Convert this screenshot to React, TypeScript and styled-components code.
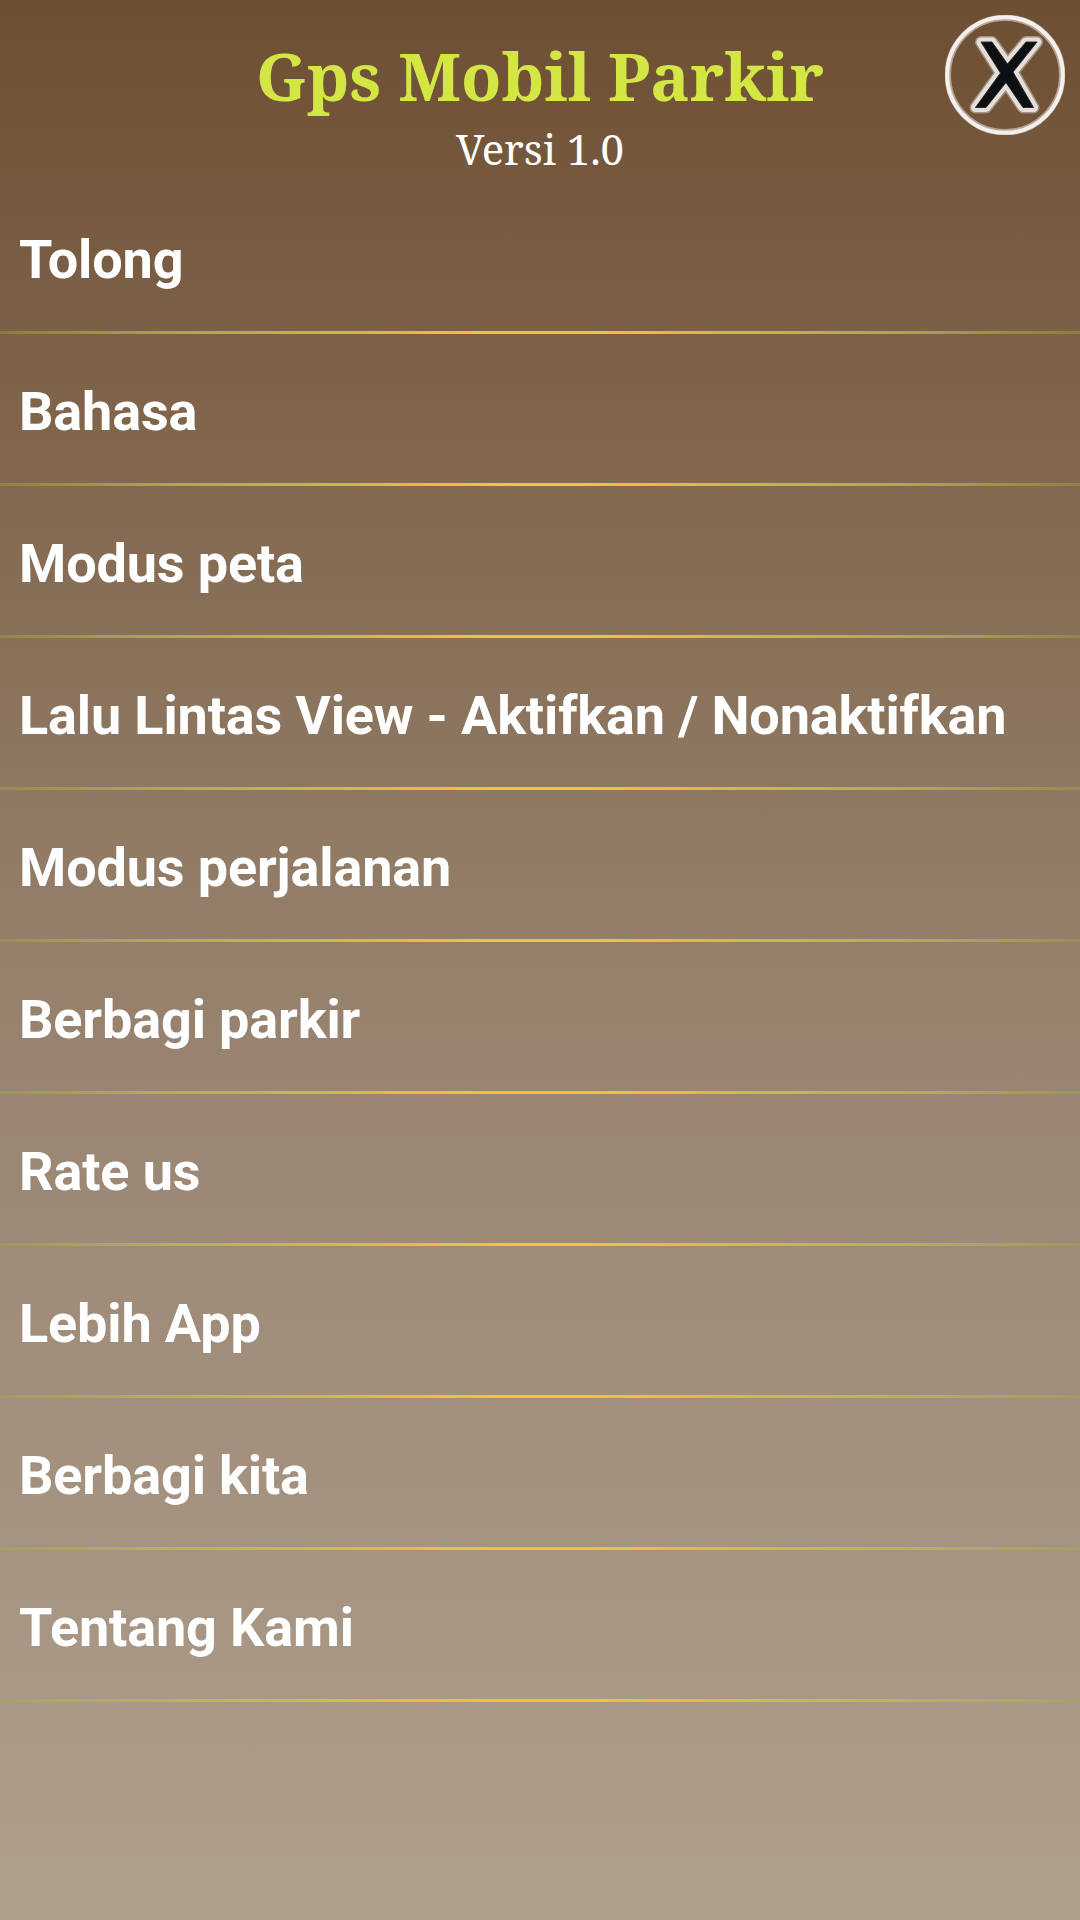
import React from "react";
import styled, { createGlobalStyle } from "styled-components";

const GlobalStyle = createGlobalStyle`
  body { margin: 0; }
`;
const Screen = styled.main`
  position: relative;
  width: 1080px;
  height: 1920px;
  overflow: hidden;
  background: linear-gradient(180deg, #6d4f33 0%, #7f6349 20%, #8f7963 42%, #9a8673 58%, #af9f8d 100%);
  color: #fff;
`;
const Header = styled.header`
  height: 182px;
  display: flex;
  flex-direction: column;
  align-items: center;
  box-sizing: border-box;
  padding-top: 35px;
  font-family: "Droid Serif", "Noto Serif", "DejaVu Serif", serif;
`;
const Title = styled.h1`
  margin: 0;
  font-size: 66px;
  line-height: 80px;
  font-weight: 700;
  color: #d4e644;
  white-space: nowrap;
`;
const Version = styled.div`
  padding-top: 2px;
  font-size: 42px;
  line-height: 64px;
  letter-spacing: -0.1px;
`;
const Close = styled.button`
  position: absolute;
  top: 15px;
  right: 15px;
  width: 120px;
  height: 120px;
  padding: 0;
  border: 0;
  background: none;
`;
const List = styled.ul`
  margin: 0;
  padding: 0;
  list-style: none;
`;
const Row = styled.li`
  height: 152px;
  box-sizing: border-box;
  display: flex;
  flex-direction: column;
`;
const Label = styled.span`
  height: 149px;
  box-sizing: border-box;
  padding: 46px 19px 0;
  font: 700 54px/64px Roboto, sans-serif;
  letter-spacing: -0.14px;
  white-space: nowrap;
`;
const Divider = styled.div`
  height: 3px;
  background: linear-gradient(
    90deg,
    rgba(160, 175, 70, 0.35),
    rgba(190, 192, 68, 0.7) 15%,
    rgba(212, 194, 66, 0.9) 32%,
    #ffbb48 46%,
    #ffbb48 54%,
    rgba(212, 194, 66, 0.9) 68%,
    rgba(190, 192, 68, 0.7) 85%,
    rgba(160, 175, 70, 0.35)
  );
`;

const items = ["Tolong", "Bahasa", "Modus peta", "Lalu Lintas View - Aktifkan / Nonaktifkan", "Modus perjalanan", "Berbagi parkir", "Rate us", "Lebih App", "Berbagi kita", "Tentang Kami"];

const crossPath = "M36 27 L47 27 L62.5 49 L81 27 L92 27 L68 57 L88.5 92.5 L78 92.5 L61 67.5 L41 92.5 L30.5 92.5 L55.5 58 Z";

export default function App() {
  return (
    <Screen>
      <GlobalStyle />
      <Header>
        <Title>Gps Mobil Parkir</Title>
        <Version>Versi 1.0</Version>
      </Header>
      <Close aria-label="Tutup">
        <svg width="120" height="120" viewBox="0 0 120 120" fill="none">
          <circle cx="60" cy="60" r="57.2" stroke="#b5a496" strokeWidth="6.4" />
          <circle cx="60" cy="60" r="57.8" stroke="#f6f0ec" strokeWidth="4" />
          <path d={crossPath} stroke="#a39182" strokeWidth="12" strokeLinejoin="round" />
          <path d={crossPath} stroke="#e6deda" strokeWidth="9" strokeLinejoin="round" />
          <path d={crossPath} fill="#0c1012" stroke="#2c2b2a" strokeWidth="1" />
        </svg>
      </Close>
      <List>
        {items.map((t) => (
          <Row key={t}>
            <Label>{t}</Label>
            <Divider />
          </Row>
        ))}
      </List>
    </Screen>
  );
}
